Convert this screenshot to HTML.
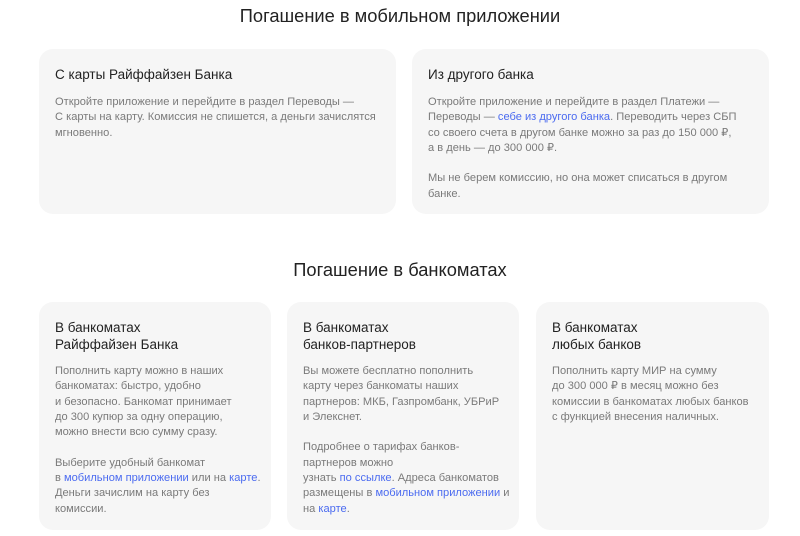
<!DOCTYPE html>
<html><head><meta charset="utf-8"><style>
*{margin:0;padding:0;box-sizing:border-box}
body{width:800px;height:536px;background:#fff;font-family:"Liberation Sans",sans-serif;position:relative;overflow:hidden}
h2{position:absolute;left:0;width:800px;text-align:center;font-weight:normal;font-size:18.3px;color:#222}
.c{position:absolute;background:#f6f6f6;border-radius:14px;padding:0 16px}
.t{font-size:13.5px;color:#222;line-height:17px;position:absolute;left:16px}
.b{font-size:11.1px;color:#7a7a7a;line-height:15.3px;position:absolute;left:16px;right:4px;white-space:nowrap}
a{color:#4b6bf0;text-decoration:none}
</style></head><body>
<h2 style="top:5px">Погашение в мобильном приложении</h2>
<div class="c" style="left:39px;top:49px;width:357px;height:165px">
<div class="t" style="top:17px">С карты Райффайзен Банка</div>
<div class="b" style="top:46px">Откройте приложение и перейдите в раздел Переводы —<br>С карты на карту. Комиссия не спишется, а деньги зачислятся<br>мгновенно.</div>
</div>
<div class="c" style="left:412px;top:49px;width:357px;height:165px">
<div class="t" style="top:17px">Из другого банка</div>
<div class="b" style="top:46px">Откройте приложение и перейдите в раздел Платежи —<br>Переводы — <a>себе из другого банка</a>. Переводить через СБП<br>со своего счета в другом банке можно за раз до 150 000 ₽,<br>а в день — до 300 000 ₽.<br><br>Мы не берем комиссию, но она может списаться в другом<br>банке.</div>
</div>
<h2 style="top:259px">Погашение в банкоматах</h2>
<div class="c" style="left:39px;top:302px;width:232px;height:228px">
<div class="t" style="top:17px">В банкоматах<br>Райффайзен Банка</div>
<div class="b" style="top:62px">Пополнить карту можно в наших<br>банкоматах: быстро, удобно<br>и безопасно. Банкомат принимает<br>до 300 купюр за одну операцию,<br>можно внести всю сумму сразу.<br><br>Выберите удобный банкомат<br>в <a>мобильном приложении</a> или на <a>карте</a>.<br>Деньги зачислим на карту без<br>комиссии.</div>
</div>
<div class="c" style="left:287px;top:302px;width:232px;height:228px">
<div class="t" style="top:17px">В банкоматах<br>банков-партнеров</div>
<div class="b" style="top:62px">Вы можете бесплатно пополнить<br>карту через банкоматы наших<br>партнеров: МКБ, Газпромбанк, УБРиР<br>и Элекснет.<br><br>Подробнее о тарифах банков-<br>партнеров можно<br>узнать <a>по ссылке</a>. Адреса банкоматов<br>размещены в <a>мобильном приложении</a> и<br>на <a>карте</a>.</div>
</div>
<div class="c" style="left:536px;top:302px;width:233px;height:228px">
<div class="t" style="top:17px">В банкоматах<br>любых банков</div>
<div class="b" style="top:62px">Пополнить карту МИР на сумму<br>до 300 000 ₽ в месяц можно без<br>комиссии в банкоматах любых банков<br>с функцией внесения наличных.</div>
</div>
</body></html>
